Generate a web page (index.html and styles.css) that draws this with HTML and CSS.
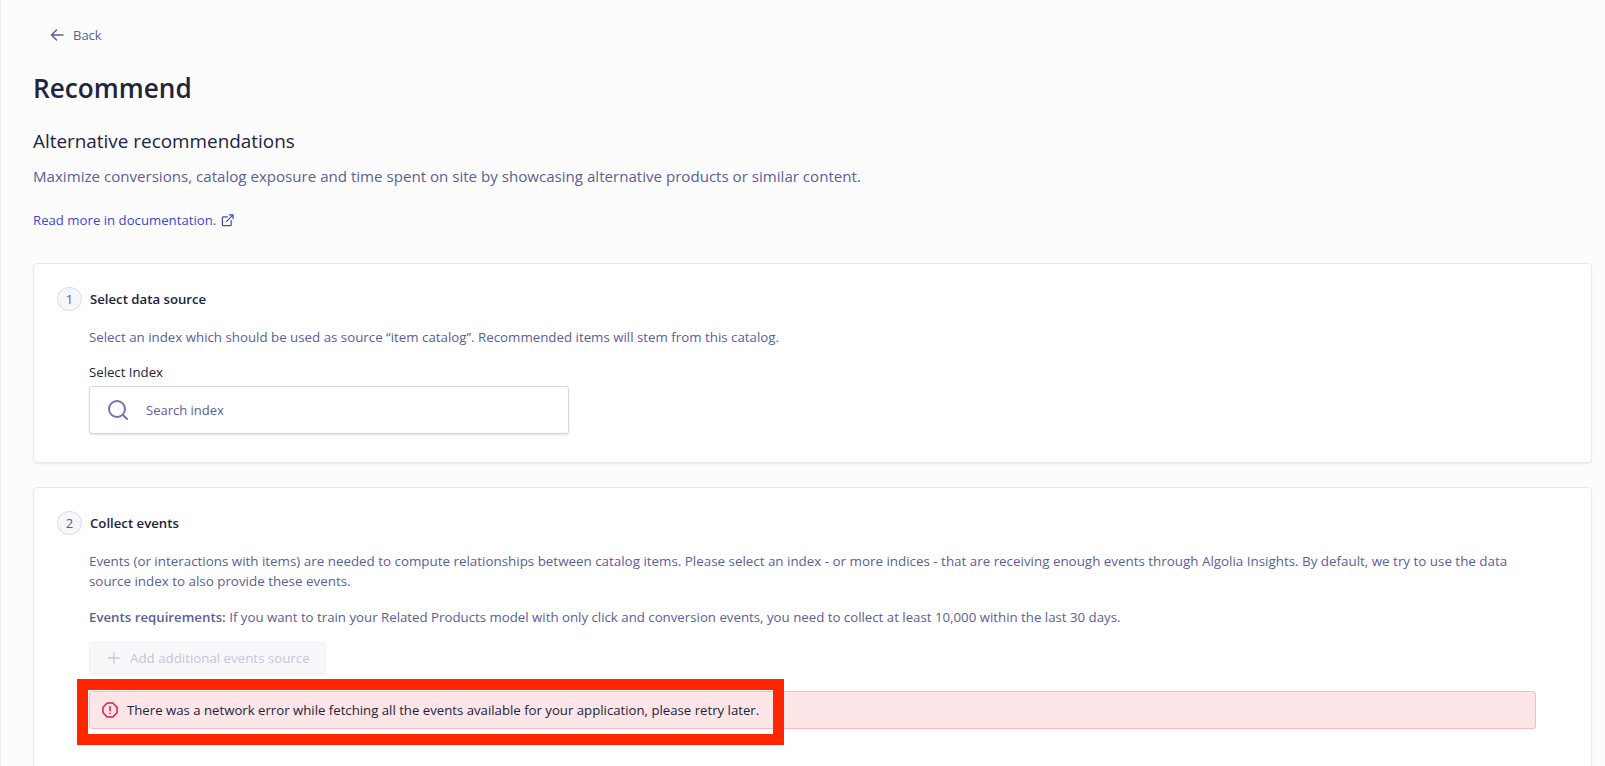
FILE: index.html
```html
<!DOCTYPE html>
<html lang="en">
<head>
<meta charset="utf-8">
<title>Recommend</title>
<link rel="stylesheet" href="styles.css">
</head>
<body>
<main class="page">
  <a class="back" href="#">
    <svg class="back-icon" viewBox="0 0 14 14" fill="none" stroke="currentColor" stroke-width="1.500" stroke-linecap="round" stroke-linejoin="round"><path d="M13 7H1.500M6.500 2 1.500 7l5 5"/></svg>
    <span>Back</span>
  </a>
  <h1 class="title">Recommend</h1>
  <h2 class="subtitle">Alternative recommendations</h2>
  <p class="lead">Maximize conversions, catalog exposure and time spent on site by showcasing alternative products or similar content.</p>
  <a class="doc-link" href="#">Read more in documentation.
    <svg class="ext-icon" viewBox="0 0 14 14" fill="none" stroke="currentColor" stroke-width="1.300" stroke-linecap="round" stroke-linejoin="round"><path d="M7 3H2.500A1 1 0 0 0 1.500 4v7.500a1 1 0 0 0 1 1H10a1 1 0 0 0 1-1V7M9 1h4v4M13 1 6 8"/></svg>
  </a>

  <section class="card card-one">
    <div class="step-head"><span class="step-num">1</span><h3 class="step-title">Select data source</h3></div>
    <div class="step-body">
      <p class="text">Select an index which should be used as source “item catalog”. Recommended items will stem from this catalog.</p>
      <label class="field-label">Select Index</label>
      <div class="search">
        <svg class="search-icon" viewBox="0 0 20 20" fill="none" stroke="currentColor" stroke-width="2" stroke-linecap="round"><circle cx="9" cy="9" r="8"/><path d="m15 15 4 4"/></svg>
        <span>Search index</span>
      </div>
    </div>
  </section>

  <section class="card card-two">
    <div class="step-head"><span class="step-num">2</span><h3 class="step-title">Collect events</h3></div>
    <div class="step-body">
      <p class="text events-text">Events (or interactions with items) are needed to compute relationships between catalog items. Please select an index - or more indices - that are receiving enough events through Algolia Insights. By default, we try to use the data source index to also provide these events.</p>
      <p class="text req-text"><strong>Events requirements:</strong> If you want to train your Related Products model with only click and conversion events, you need to collect at least 10,000 within the last 30 days.</p>
      <button class="add-btn" type="button" disabled>
        <svg class="plus-icon" viewBox="0 0 12 12" fill="none" stroke="currentColor" stroke-width="1.300" stroke-linecap="round"><path d="M6 .8v10.400M.8 6h10.400"/></svg>
        <span>Add additional events source</span>
      </button>
      <div class="error">
        <svg class="error-icon" viewBox="0 0 16 16" fill="none" stroke="currentColor" stroke-width="1.500" stroke-linecap="round" stroke-linejoin="round"><path d="M5.200 1h5.600L15 5.200v5.600L10.800 15H5.200L1 10.800V5.200Z"/><path d="M8 4.500v4.200M8 11.300v.1"/></svg>
        <span>There was a network error while fetching all the events available for your application, please retry later.</span>
      </div>
    </div>
  </section>
</main>
<div class="annotation"></div>
</body>
</html>
```
FILE: styles.css
```css
* { box-sizing: border-box; }
html, body { height: 100%; }
body {
  margin: 0;
  height: 766px;
  overflow: hidden;
  position: relative;
  background: #fcfcfd;
  font-family: "Open Sans", "Liberation Sans", sans-serif;
  color: #5a5e9a;
}
.page {
  height: 766px;
  overflow: hidden;
  padding: 0 13px 0 32px;
  border-left: 1px solid #ecebf6;
}
.back {
  display: flex;
  align-items: center;
  gap: 9px;
  height: 20px;
  margin: 25px 0 0 17px;
  color: #5a5e9a;
  font-size: 13px;
  text-decoration: none;
}
.back-icon { width: 14px; height: 14px; }
.title {
  margin: 25px 0 0;
  font-size: 26.200px;
  line-height: 36px;
  font-weight: 600;
  color: #21243d;
}
.subtitle {
  margin: 22px 0 0;
  font-size: 18.900px;
  line-height: 26px;
  font-weight: 400;
  color: #21243d;
}
.lead {
  margin: 11px 0 0;
  font-size: 15.100px;
  line-height: 22px;
  color: #5a5e9a;
}
.doc-link {
  display: flex;
  align-items: center;
  gap: 5px;
  margin-top: 23px;
  height: 20px;
  font-size: 13.200px;
  color: #3a46d8;
  text-decoration: none;
}
.ext-icon { width: 13px; height: 13px; }
.card {
  background: #fff;
  border: 1px solid #e9e9ef;
  border-radius: 4px;
  box-shadow: 0 1px 2px rgba(35, 38, 59, .08);
}
.card-one { height: 200px; margin-top: 33px; padding: 23px 23px 0; }
.card-two { height: 320px; margin-top: 24px; padding: 23px 23px 0; }
.step-head { display: flex; align-items: center; gap: 8px; height: 24px; }
.step-num {
  width: 25px;
  height: 24px;
  border-radius: 50%;
  border: 1px solid #dcdcee;
  background: #f5f5fa;
  color: #5a5e9a;
  font-size: 13px;
  display: flex;
  align-items: center;
  justify-content: center;
}
.step-title { margin: 0; font-size: 13.200px; line-height: 20px; font-weight: 600; color: #21243d; }
.step-body { margin: 16px 0 0 32px; }
.text { margin: 0; font-size: 13.300px; line-height: 20px; color: #5a5e9a; }
.events-text { max-width: 1440px; font-size: 13.380px; }
.text strong { font-weight: 600; }
.field-label { display: block; margin-top: 15px; font-size: 13.200px; line-height: 20px; color: #21243d; }
.search {
  display: flex;
  align-items: center;
  gap: 18px;
  width: 480px;
  height: 48px;
  margin-top: 4px;
  padding-left: 18px;
  background: #fff;
  border: 1px solid #d6d6e7;
  border-radius: 3px;
  box-shadow: 0 1px 2px rgba(90, 94, 154, .2);
  font-size: 13px;
  color: #5a5e9a;
}
.search-icon { width: 20px; height: 20px; color: #7075ab; flex: none; }
.req-text { margin-top: 16px; font-size: 13.250px; }
.add-btn {
  display: flex;
  align-items: center;
  gap: 10px;
  width: 237px;
  height: 32px;
  margin-top: 15px;
  padding: 0 0 0 18px;
  border: 1px solid #eeeef5;
  border-radius: 3px;
  background: #f8f8fb;
  color: #c4c5dd;
  font: 400 13.300px "Open Sans", "Liberation Sans", sans-serif;
}
.plus-icon { width: 12px; height: 12px; }
.error {
  display: flex;
  align-items: center;
  gap: 9px;
  width: 1447px;
  height: 38px;
  margin-top: 17px;
  padding-left: 12px;
  background: #fee5e8;
  border: 1px solid #fdb9c2;
  border-radius: 3px;
  font-size: 13.200px;
  color: #21243d;
}
.error-icon { width: 16px; height: 16px; color: #e8173f; flex: none; }
.annotation {
  position: absolute;
  left: 77px;
  top: 679px;
  width: 707px;
  height: 66px;
  border: 11px solid #ff2600;
}
```
